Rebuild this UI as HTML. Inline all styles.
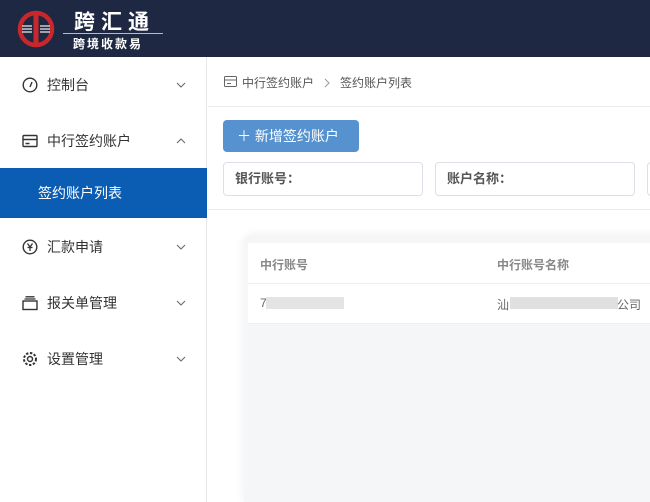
<!DOCTYPE html><html><head><meta charset="utf-8"><style>
*{margin:0;padding:0;box-sizing:border-box}
html,body{width:650px;height:502px;overflow:hidden}
body{background:#fff;font-family:"Liberation Sans","Noto Sans CJK SC",sans-serif;position:relative;color:#333}
.hd{position:absolute;left:0;top:0;width:650px;height:57px;background:#1f2843}
.sb{position:absolute;left:0;top:57px;width:207px;height:445px;border-right:1px solid #e8e8e8;background:#fff}
.it{position:absolute;left:0;width:207px;height:50px;font-size:14px;color:#333;line-height:50px}
.it svg.i{position:absolute;left:22px;top:17px}
.it span{position:absolute;left:47px}
.it .ch{position:absolute;left:176px;top:21px}
.act{background:#0b5db4;color:#fff}
.abs{position:absolute}
.inp{position:absolute;top:162px;height:34px;border:1px solid #dcdfe6;border-radius:4px;font-size:13px;font-weight:bold;color:#555;line-height:32px;padding-left:11px}
</style></head><body>
<div class="hd">
<svg class="abs" style="left:17px;top:10px" width="38" height="38" viewBox="0 0 38 38"><circle cx="19" cy="19" r="16" fill="none" stroke="#c8282c" stroke-width="4.5"/><rect x="16.5" y="3" width="5" height="32" fill="#c8282c"/><path d="M5 16h10M5 19h10M5 22h10M23 16h10M23 19h10M23 22h10" stroke="#ccc" stroke-width="1.5"/></svg>
<div class="abs" style="left:74px;top:6px;color:#fff;font-size:21px;font-weight:bold;letter-spacing:6px">跨汇通</div>
<div class="abs" style="left:63px;top:33px;width:100px;border-top:1px solid #bbb"></div>
<div class="abs" style="left:73px;top:35px;color:#fff;font-size:12px;font-weight:bold;letter-spacing:2px">跨境收款易</div>
</div>
<div class="sb">
<div class="it" style="top:3px"><svg class="i" width="16" height="16" viewBox="0 0 16 16"><circle cx="8" cy="8" r="6.8" fill="none" stroke="#333" stroke-width="1.4"/><path d="M8 10l2-5" stroke="#333" stroke-width="1.4"/></svg><span>控制台</span><svg class="ch" width="10" height="8"><path d="M1 2l4 4 4-4" fill="none" stroke="#666"/></svg></div>
<div class="it" style="top:59px"><svg class="i" width="16" height="16" viewBox="0 0 16 16"><rect x="1" y="2.5" width="14" height="11" rx="1" fill="none" stroke="#333" stroke-width="1.4"/><path d="M1 6.5h14M3.5 10.5h4" stroke="#333" stroke-width="1.6"/></svg><span>中行签约账户</span><svg class="ch" width="10" height="8"><path d="M1 6l4-4 4 4" fill="none" stroke="#666"/></svg></div>
<div class="it act" style="top:111px"><span style="left:38px">签约账户列表</span></div>
<div class="it" style="top:165px"><svg class="i" width="16" height="16" viewBox="0 0 16 16"><circle cx="8" cy="8" r="6.8" fill="none" stroke="#333" stroke-width="1.4"/><path d="M5.5 4.5L8 8l2.5-3.5M8 8v4M5.5 8.5h5" stroke="#333" stroke-width="1.3" fill="none"/></svg><span>汇款申请</span><svg class="ch" width="10" height="8"><path d="M1 2l4 4 4-4" fill="none" stroke="#666"/></svg></div>
<div class="it" style="top:221px"><svg class="i" width="16" height="16" viewBox="0 0 16 16"><rect x="1" y="6" width="14" height="8.5" fill="none" stroke="#333" stroke-width="1.4"/><path d="M2.5 4h11M3.5 1.8h9" stroke="#333" stroke-width="1.3"/></svg><span>报关单管理</span><svg class="ch" width="10" height="8"><path d="M1 2l4 4 4-4" fill="none" stroke="#666"/></svg></div>
<div class="it" style="top:277px"><svg class="i" width="16" height="16" viewBox="0 0 16 16"><circle cx="8" cy="8" r="2.5" fill="none" stroke="#333" stroke-width="1.4"/><circle cx="8" cy="8" r="6" fill="none" stroke="#333" stroke-width="2" stroke-dasharray="2.4 1.6"/></svg><span>设置管理</span><svg class="ch" width="10" height="8"><path d="M1 2l4 4 4-4" fill="none" stroke="#666"/></svg></div>
</div>
<svg class="abs" style="left:224px;top:76px" width="13" height="11" viewBox="0 0 13 11"><rect x="0.5" y="0.5" width="12" height="10" rx="1" fill="none" stroke="#666"/><path d="M1 4h11M3 7.5h4" stroke="#666"/></svg>
<div class="abs" style="left:242px;top:74px;font-size:12px;color:#555">中行签约账户</div>
<svg class="abs" style="left:323px;top:78px" width="8" height="10"><path d="M2 1l4 4-4 4" fill="none" stroke="#999"/></svg>
<div class="abs" style="left:340px;top:74px;font-size:12px;color:#555">签约账户列表</div>
<div class="abs" style="left:208px;top:106px;width:442px;border-top:1px solid #eaeaea"></div>
<div class="abs" style="left:223px;top:120px;width:136px;height:32px;background:#5592cf;border-radius:4px;color:#fff;font-size:14px;line-height:32px;padding-left:14px">＋ 新增签约账户</div>
<div class="inp" style="left:223px;width:200px">银行账号：</div>
<div class="inp" style="left:435px;width:200px">账户名称：</div>
<div class="inp" style="left:647px;width:20px"></div>
<div class="abs" style="left:208px;top:209px;width:442px;border-top:1px solid #eaeaea"></div>
<div class="abs" style="left:244px;top:235px;width:420px;height:267px;background:#f5f6f7;border-radius:8px 8px 0 0;box-shadow:0 0 10px rgba(0,0,0,.07)"></div>
<div class="abs" style="left:248px;top:243px;width:402px;height:81px;background:#fff"></div>
<div class="abs" style="left:260px;top:256px;font-size:12px;font-weight:bold;color:#888">中行账号</div>
<div class="abs" style="left:497px;top:256px;font-size:12px;font-weight:bold;color:#888">中行账号名称</div>
<div class="abs" style="left:248px;top:283px;width:402px;border-top:1px solid #eee"></div>
<div class="abs" style="left:248px;top:323px;width:402px;border-top:1px solid #eee"></div>
<div class="abs" style="left:260px;top:296px;font-size:12px;color:#666">7</div>
<div class="abs" style="left:266px;top:297px;width:78px;height:12px;background:#e4e4e4"></div>
<div class="abs" style="left:497px;top:296px;font-size:12px;color:#666">汕</div>
<div class="abs" style="left:510px;top:297px;width:108px;height:12px;background:#e0e0e0"></div>
<div class="abs" style="left:617px;top:296px;font-size:12px;color:#666">公司</div>
</body></html>
